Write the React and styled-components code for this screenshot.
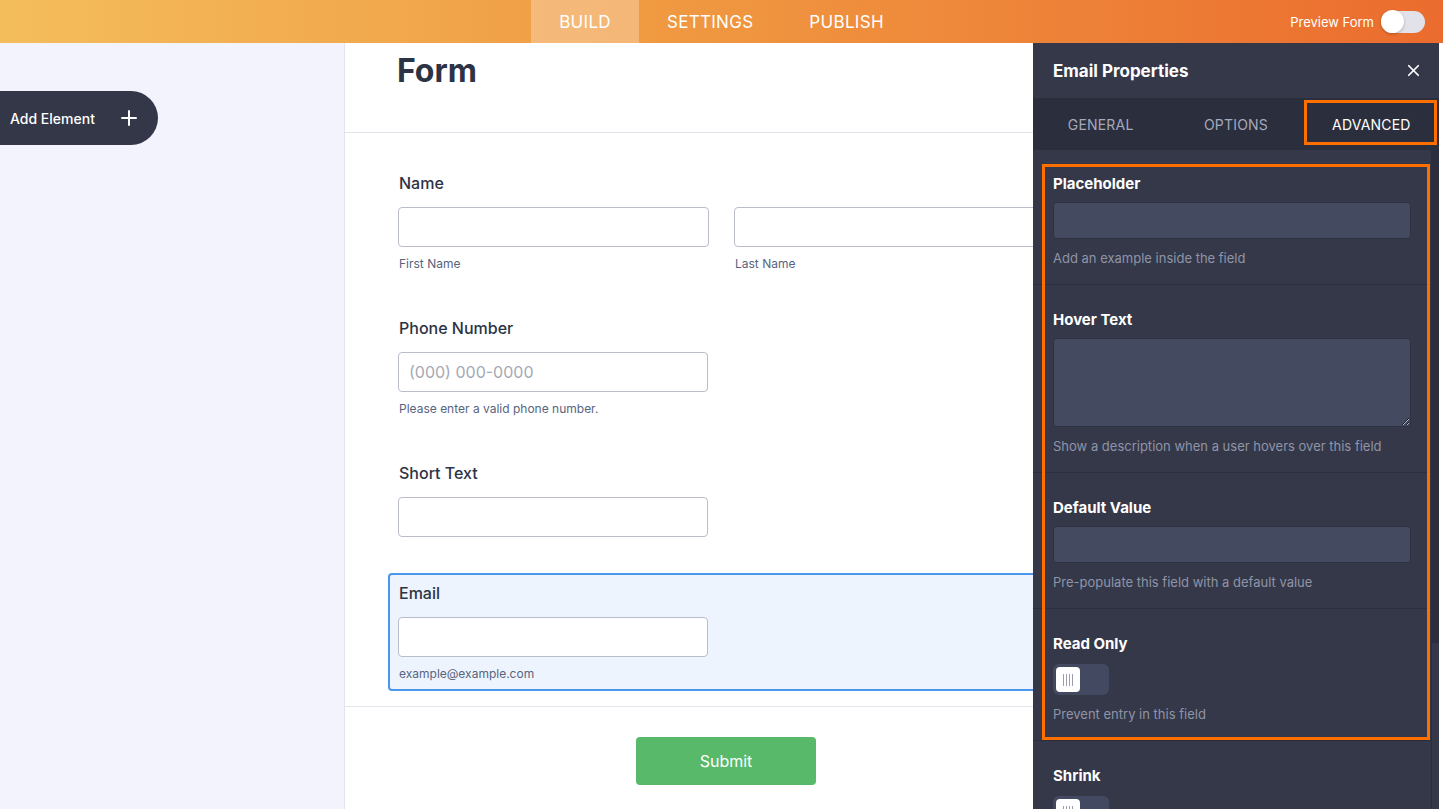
import React from "react"
import styled, { createGlobalStyle } from "styled-components"
import { Plus, X } from "lucide-react"

const GlobalStyle = createGlobalStyle`
  html, body {
    margin: 0;
    padding: 0;
    height: 100%;
    background: #fff;
  }
  body {
    font-family: Inter, "Noto Sans", sans-serif;
    overflow: hidden;
  }
  * { box-sizing: border-box; }
`

const Page = styled.div`
  display: flex;
  flex-direction: column;
  width: 1443px;
  height: 809px;
  overflow: hidden;
`

const TopBar = styled.header`
  display: grid;
  grid-template-columns: 1fr auto 1fr;
  align-items: stretch;
  height: 43px;
  flex-shrink: 0;
  background: linear-gradient(90deg, #f4bd5c 0%, #f09a42 45%, #eb6c2e 100%);
`

const NavTabs = styled.nav`
  display: flex;
  grid-column: 2;
`

const NavTab = styled.div`
  display: flex;
  align-items: center;
  padding: 0 28px;
  font-size: 17px;
  letter-spacing: 0.3px;
  color: #fff;
  background: ${(p) => (p.active ? "rgba(255,255,255,0.28)" : "transparent")};
`

const PreviewWrap = styled.div`
  display: flex;
  align-items: center;
  justify-content: flex-end;
  gap: 7px;
  padding-right: 18px;
  font-size: 13px;
  color: #fff;
`

const PreviewSwitch = styled.div`
  display: flex;
  align-items: center;
  width: 44px;
  height: 22px;
  border-radius: 11px;
  background: #e2e3ea;
`

const PreviewKnob = styled.div`
  width: 23px;
  height: 23px;
  border-radius: 50%;
  background: #fff;
  box-shadow: 0 1px 3px rgba(0, 0, 0, 0.25);
`

const Main = styled.div`
  display: flex;
  flex: 1;
  min-height: 0;
  padding-right: 4px;
  background: #fff;
`

const Sidebar = styled.aside`
  width: 345px;
  flex-shrink: 0;
  padding-top: 48px;
  background: #f3f3fd;
  border-right: 1px solid #e4e4ef;
`

const AddButton = styled.button`
  display: flex;
  align-items: center;
  justify-content: space-between;
  width: 158px;
  height: 54px;
  padding: 0 17px 0 10px;
  border: none;
  border-radius: 0 27px 27px 0;
  background: #343748;
  color: #fff;
  font-family: Inter, sans-serif;
  font-size: 14px;
  font-weight: 500;
`

const FormArea = styled.section`
  flex: 1;
  min-width: 0;
  overflow: hidden;
  background: #fff;
`

const FormInner = styled.div`
  width: 762px;
`

const FormHeader = styled.div`
  height: 90px;
  padding: 8px 0 0 52px;
  border-bottom: 1px solid #e1e2ea;
  width: 688px;
`

const FormTitle = styled.h1`
  margin: 0;
  font-size: 32px;
  font-weight: 700;
  line-height: 40px;
  color: #2c3345;
`

const FieldList = styled.div`
  display: flex;
  flex-direction: column;
  gap: 27px;
  padding: 30px 0 15px 43px;
  border-bottom: 1px solid #e4e4ee;
  width: 688px;
`

const Field = styled.div`
  width: 700px;
  padding: 8px 8px 7px;
  border: 2px solid ${(p) => (p.selected ? "#4a96ee" : "transparent")};
  border-radius: 4px;
  background: ${(p) => (p.selected ? "#edf4fd" : "transparent")};
`

const FieldLabel = styled.div`
  font-size: 16px;
  font-weight: 500;
  line-height: 20px;
  color: #2c3345;
  padding-left: 1px;
`

const InputRow = styled.div`
  display: flex;
  gap: 25px;
  margin-top: 14px;
`

const InputCol = styled.div`
  display: flex;
  flex-direction: column;
`

const TextInput = styled.div`
  display: flex;
  align-items: center;
  width: ${(p) => p.w || 310}px;
  height: 40px;
  padding: 0 10px;
  border: 1px solid #b8bdc9;
  border-radius: 4px;
  background: #fff;
  font-size: 16px;
  color: #a4a9b6;
`

const SubLabel = styled.div`
  margin-top: 9px;
  padding-left: 1px;
  font-size: 12px;
  line-height: 16px;
  color: #57647e;
`

const SubmitRow = styled.div`
  display: flex;
  justify-content: center;
  padding-top: 30px;
`

const SubmitButton = styled.button`
  width: 180px;
  height: 48px;
  border: none;
  border-radius: 4px;
  background: #58b96a;
  color: #fff;
  font-family: Inter, sans-serif;
  font-size: 16px;
`

const Panel = styled.aside`
  display: flex;
  flex-direction: column;
  width: 406px;
  flex-shrink: 0;
  background: #353849;
`

const PanelHeader = styled.div`
  display: flex;
  align-items: center;
  justify-content: space-between;
  height: 55px;
  padding: 0 16px 0 20px;
  color: #fff;
  font-size: 17px;
  font-weight: 700;
`

const PanelTabs = styled.div`
  display: grid;
  grid-template-columns: repeat(3, 1fr);
  height: 52px;
  background: #2b2e3d;
`

const PanelTab = styled.div`
  position: relative;
  display: flex;
  align-items: center;
  justify-content: center;
  font-size: 14px;
  letter-spacing: 0.2px;
  color: ${(p) => (p.active ? "#fff" : "#a5a9bb")};
`

const TabFrame = styled.div`
  position: absolute;
  top: 2px;
  left: 0;
  right: 2px;
  bottom: 5px;
  border: 3px solid #ff6f00;
`

const PanelBody = styled.div`
  display: flex;
  flex: 1;
  min-height: 0;
`

const PanelContent = styled.div`
  flex: 1;
  min-width: 0;
`

const Scrollbar = styled.div`
  display: flex;
  flex-direction: column;
  width: 8px;
  border-left: 1px solid #2b2e3d;
`

const ScrollThumb = styled.div`
  height: 493px;
  background: #2b2e3d;
`

const Framed = styled.div`
  position: relative;
`

const AnnotationFrame = styled.div`
  position: absolute;
  top: 14px;
  left: 9px;
  right: 1px;
  bottom: 1px;
  border: 3px solid #ff6f00;
  pointer-events: none;
`

const Section = styled.div`
  display: flex;
  flex-direction: column;
  padding: ${(p) => (p.first ? "26px" : "27px")} 20px 18px;
  border-bottom: 1px solid #2b2e3d;
`

const SectionLabel = styled.div`
  font-size: 15px;
  font-weight: 700;
  line-height: 16px;
  color: #fff;
`

const DarkInput = styled.div`
  margin-top: 10px;
  height: 37px;
  width: 358px;
  border: 1px solid #2d3142;
  border-radius: 4px;
  background: #444a5f;
`

const DarkTextarea = styled.textarea`
  display: block;
  margin-top: 10px;
  height: 89px;
  width: 358px;
  border: 1px solid #2d3142;
  border-radius: 4px;
  background: #444a5f;
  resize: vertical;
  outline: none;
`

const Helper = styled.div`
  margin-top: 11px;
  font-size: 13px;
  line-height: 16px;
  color: #8f94a7;
`

const Toggle = styled.div`
  display: flex;
  align-items: center;
  margin-top: 12px;
  width: 56px;
  height: 31px;
  padding: 3px;
  border-radius: 6px;
  background: #434961;
`

const ToggleKnob = styled.div`
  display: flex;
  align-items: center;
  justify-content: center;
  gap: 2px;
  width: 24px;
  height: 25px;
  border-radius: 4px;
  background: #fff;
`

const Grip = styled.span`
  width: 1px;
  height: 12px;
  background: #9a9db0;
`

const Knob = () => (
  <ToggleKnob>
    <Grip />
    <Grip />
    <Grip />
    <Grip />
  </ToggleKnob>
)

const App = () => {
  return (
    <Page>
      <GlobalStyle />
      <TopBar>
        <NavTabs>
          <NavTab active>BUILD</NavTab>
          <NavTab>SETTINGS</NavTab>
          <NavTab>PUBLISH</NavTab>
        </NavTabs>
        <PreviewWrap>
          Preview Form
          <PreviewSwitch>
            <PreviewKnob />
          </PreviewSwitch>
        </PreviewWrap>
      </TopBar>

      <Main>
        <Sidebar>
          <AddButton>
            Add Element
            <Plus size={24} strokeWidth={2} color="#fff" />
          </AddButton>
        </Sidebar>

        <FormArea>
          <FormInner>
            <FormHeader>
              <FormTitle>Form</FormTitle>
            </FormHeader>
            <FieldList>
              <Field>
                <FieldLabel>Name</FieldLabel>
                <InputRow>
                  <InputCol>
                    <TextInput w={311} />
                    <SubLabel>First Name</SubLabel>
                  </InputCol>
                  <InputCol>
                    <TextInput w={311} />
                    <SubLabel>Last Name</SubLabel>
                  </InputCol>
                </InputRow>
              </Field>
              <Field>
                <FieldLabel>Phone Number</FieldLabel>
                <InputRow>
                  <InputCol>
                    <TextInput>(000) 000-0000</TextInput>
                    <SubLabel>Please enter a valid phone number.</SubLabel>
                  </InputCol>
                </InputRow>
              </Field>
              <Field>
                <FieldLabel>Short Text</FieldLabel>
                <InputRow>
                  <TextInput />
                </InputRow>
              </Field>
              <Field selected>
                <FieldLabel>Email</FieldLabel>
                <InputRow>
                  <InputCol>
                    <TextInput />
                    <SubLabel>example@example.com</SubLabel>
                  </InputCol>
                </InputRow>
              </Field>
            </FieldList>
            <SubmitRow>
              <SubmitButton>Submit</SubmitButton>
            </SubmitRow>
          </FormInner>
        </FormArea>

        <Panel>
          <PanelHeader>
            Email Properties
            <X size={19} strokeWidth={2.2} color="#fff" />
          </PanelHeader>
          <PanelTabs>
            <PanelTab>GENERAL</PanelTab>
            <PanelTab>OPTIONS</PanelTab>
            <PanelTab active>
              ADVANCED
              <TabFrame />
            </PanelTab>
          </PanelTabs>
          <PanelBody>
            <PanelContent>
              <Framed>
                <Section first>
                  <SectionLabel>Placeholder</SectionLabel>
                  <DarkInput />
                  <Helper>Add an example inside the field</Helper>
                </Section>
                <Section>
                  <SectionLabel>Hover Text</SectionLabel>
                  <DarkTextarea readOnly />
                  <Helper>Show a description when a user hovers over this field</Helper>
                </Section>
                <Section>
                  <SectionLabel>Default Value</SectionLabel>
                  <DarkInput />
                  <Helper>Pre-populate this field with a default value</Helper>
                </Section>
                <Section>
                  <SectionLabel>Read Only</SectionLabel>
                  <Toggle>
                    <Knob />
                  </Toggle>
                  <Helper>Prevent entry in this field</Helper>
                </Section>
                <AnnotationFrame />
              </Framed>
              <Section>
                <SectionLabel>Shrink</SectionLabel>
                <Toggle>
                  <Knob />
                </Toggle>
              </Section>
            </PanelContent>
            <Scrollbar>
              <ScrollThumb />
            </Scrollbar>
          </PanelBody>
        </Panel>
      </Main>
    </Page>
  )
}

export default App
